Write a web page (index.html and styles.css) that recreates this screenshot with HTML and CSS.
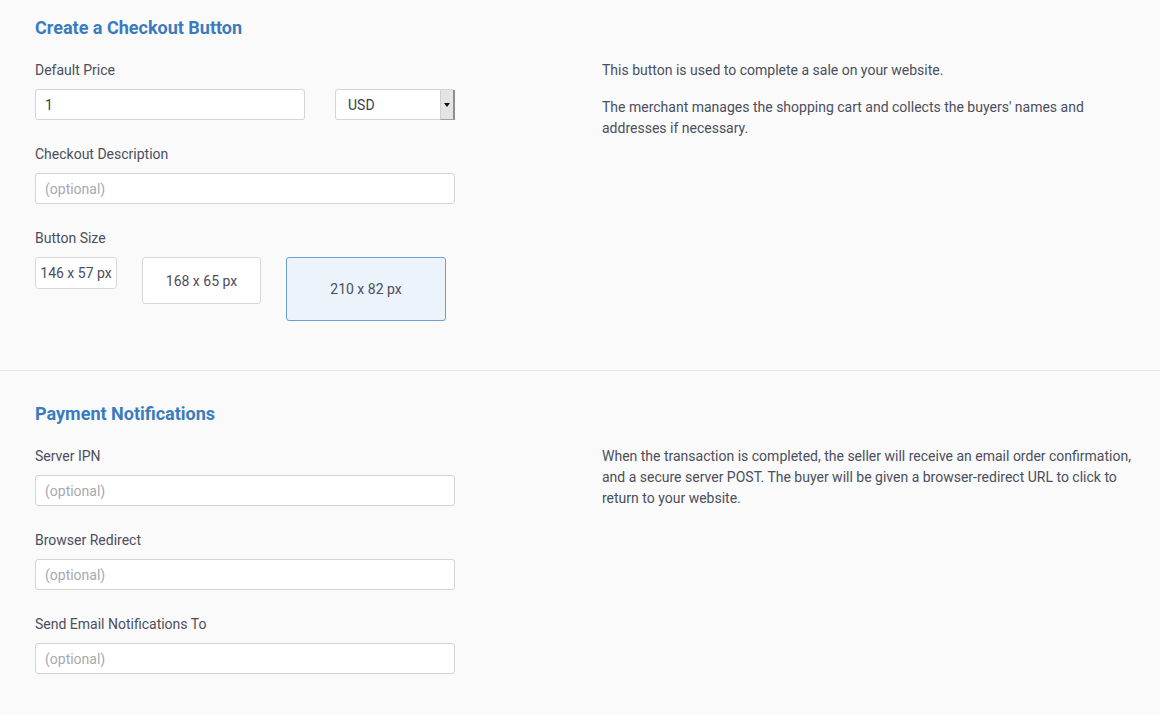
FILE: index.html
```html
<!DOCTYPE html>
<html>
<head lang="en">
    <meta charset="UTF-8">
    <title>Checkout Button</title>
    <link rel="stylesheet" href="styles.css">
</head>
<body>

<div class="section first">
    <h2 class="title">Create a Checkout Button</h2>
    <div class="cols">
        <div class="form">
            <label class="label">Default Price</label>
            <div class="price-row">
                <input type="text" class="input price" value="1">
                <div class="select-wrap">
                    <select class="select">
                        <option>USD</option>
                        <option>EUR</option>
                    </select>
                    <span class="select-arrow"></span>
                </div>
            </div>

            <label class="label">Checkout Description</label>
            <input type="text" class="input" placeholder="(optional)">

            <label class="label">Button Size</label>
            <div class="sizes">
                <button class="size small">146 x 57 px</button>
                <button class="size medium">168 x 65 px</button>
                <button class="size large active">210 x 82 px</button>
            </div>
        </div>
        <div class="info">
            <p>This button is used to complete a sale on your website.</p>
            <p>The merchant manages the shopping cart and collects the buyers' names and addresses if necessary.</p>
        </div>
    </div>
</div>

<div class="section second">
    <h2 class="title">Payment Notifications</h2>
    <div class="cols">
        <div class="form">
            <label class="label">Server IPN</label>
            <input type="text" class="input" placeholder="(optional)">

            <label class="label">Browser Redirect</label>
            <input type="text" class="input" placeholder="(optional)">

            <label class="label">Send Email Notifications To</label>
            <input type="text" class="input" placeholder="(optional)">
        </div>
        <div class="info">
            <p>When the transaction is completed, the seller will receive an email order confirmation, and a secure server POST. The buyer will be given a browser-redirect URL to click to return to your website.</p>
        </div>
    </div>
</div>

</body>
</html>
```

FILE: styles.css
```css
*{
    margin: 0px;
    padding: 0px;
    box-sizing: border-box;
}
body{
    background-color: #fafafa;
    font-family: Roboto, "Liberation Sans", sans-serif;
    font-size: 14px;
    color: #4b4e5c;
}
.section{
    padding: 0px 0px 0px 35px;
}
.first{
    padding-top: 17px;
    padding-bottom: 49px;
    border-bottom: 1px solid #e8e8e8;
}
.second{
    padding-top: 32px;
    padding-bottom: 40px;
}
.title{
    font-size: 18px;
    line-height: 22px;
    font-weight: bold;
    color: #3a7bbf;
    margin-bottom: 21px;
}
.cols{
    display: flex;
    gap: 147px;
}
.form{
    width: 420px;
    display: flex;
    flex-direction: column;
}
.label{
    line-height: 20px;
    margin-bottom: 9px;
}
.input{
    height: 31px;
    width: 420px;
    border: 1px solid #d3d3d8;
    border-radius: 3px;
    background-color: white;
    padding: 0px 9px;
    font-family: Roboto, "Liberation Sans", sans-serif;
    font-size: 14px;
    color: #3c3f4a;
    margin-bottom: 24px;
    outline: none;
}
.input::placeholder{
    color: #a8a8ae;
}
.price-row{
    display: flex;
    gap: 30px;
}
.price{
    width: 270px;
}
.select-wrap{
    position: relative;
    width: 120px;
    height: 31px;
}
.select{
    appearance: none;
    -webkit-appearance: none;
    width: 120px;
    height: 31px;
    border: 1px solid #d3d3d8;
    border-radius: 3px;
    background-color: white;
    padding: 0px 12px;
    font-family: Roboto, "Liberation Sans", sans-serif;
    font-size: 14px;
    color: #3c3f4a;
    outline: none;
}
.select-arrow{
    position: absolute;
    top: 1px;
    right: 0px;
    width: 15px;
    height: 30px;
    background-color: #e4e4e4;
    border-left: 1px solid #d0d0d0;
    border-right: 2px solid #8e8e8e;
    border-bottom: 1px solid #a0a0a0;
    pointer-events: none;
}
.select-arrow::after{
    content: "";
    position: absolute;
    left: 3px;
    top: 13px;
    border-left: 3px solid transparent;
    border-right: 3px solid transparent;
    border-top: 4px solid #111;
}
.sizes{
    display: flex;
    align-items: flex-start;
    gap: 25px;
}
.size{
    background-color: white;
    border: 1px solid #d8d8dc;
    border-radius: 3px;
    font-family: Roboto, "Liberation Sans", sans-serif;
    font-size: 14px;
    color: #4b4e5c;
}
.small{
    width: 82px;
    height: 32px;
}
.medium{
    width: 119px;
    height: 47px;
}
.large{
    width: 160px;
    height: 64px;
}
.active{
    background-color: #edf3fb;
    border-color: #6a9fcf;
}
.info{
    width: 540px;
    line-height: 21px;
}
.info p{
    margin-bottom: 16px;
}
```
